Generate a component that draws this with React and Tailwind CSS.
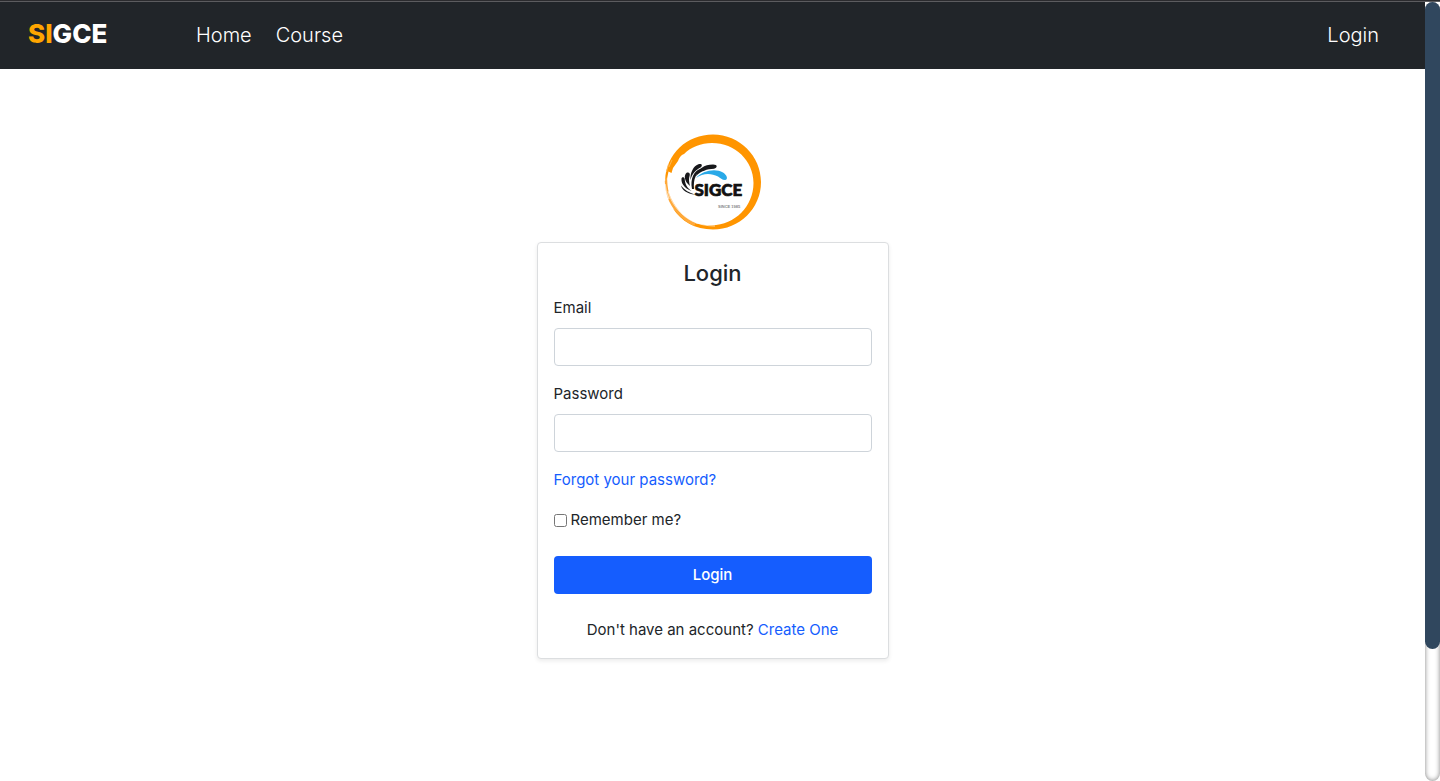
import React from "react";

function Logo() {
  return (
    <svg viewBox="0 0 120 115" className="h-[115px] w-[120px]" role="img" aria-label="SIGCE since 1985">
      <path
        fill="#ff9500"
        d="M12.200 55C13 29 34 9.500 60 9.500C86.500 9.500 108 31 108 57C108 83.500 86.500 104.500 60 104.500C42 104.500 28 96 20 83.500C25 88 31 94 39 97C45 99.500 52 100.300 59 100.300C82 100 100.500 81 100.500 58C100.500 35.500 82 18 59 18C48 18 38 22 31 29C28 30 26 33 25 36L20 43L18.500 48L15.500 46.500L14 54Z"
      />
      <path
        fill="#ffa93a"
        d="M11.800 56L14 52L14.500 60C15 66 17 72 20 77C25 86 33 94 43 98L41 101C28 95 18 83 14.500 72C12.500 66 12 61 11.800 56Z"
      />
      <path d="M15 66C18 78 27 90 39 96C46 99.500 54 101 62 101" fill="none" stroke="#fff" strokeWidth="0.800" opacity="0.8" />
      <path d="M12 59C12.500 65 14 70 16 74" fill="none" stroke="#fff" strokeWidth="1.500" opacity="0.6" />
      <path d="M15.500 39L13.500 47M19 35L16 42" stroke="#ffc36e" strokeWidth="0.700" />
      <g fill="#17181b">
        <path d="M43 51C45 44 51 39.500 60 39.500C65 39.500 64.500 42.800 61 43.700C54 44 48 46 43 51Z" />
        <path d="M37.500 55C37 48 40 41 46 39C49.500 38.500 49.500 41 47.500 42.500C42.500 45 39 49 37.500 55Z" />
        <path d="M37 61C31 56 30.500 50 34 47.500C36.500 47 37.200 48.500 36.700 50.500C35.500 54 36 57 37 61Z" />
        <path d="M38.500 66C31 63 28 58 28.500 53.500C29 51.500 31.500 52 31.700 54C32 59 34 63 38.500 66Z" />
        <path d="M42 69.500C34 69 29 65 28 60.500C32 65.500 36 67.500 42 69.500Z" />
        <path d="M39 64C37 54 41 46 47 44L50 43C43 48 40 54 41 64Z" />
      </g>
      <path d="M43 53C49 46 62 43 70 47.500C74 50 75.500 54.500 72 55C69 55 67.500 53 65 51.500C58 48 50 48 43 53Z" fill="#29a9e8" />
      <text x="41.500" y="71" fontSize="17" className="font-['Lato',sans-serif] font-black" fill="#111" stroke="#111" strokeWidth="0.700">SIGCE</text>
      <text x="65" y="83" fontSize="4" className="font-['Liberation_Sans',sans-serif] font-bold" fill="#888">SINCE 1985</text>
    </svg>
  );
}

function Field({ id, label, type }) {
  return (
    <div className="mb-4">
      <label htmlFor={id} className="mb-2 block">{label}</label>
      <input
        id={id}
        type={type}
        className="block h-[38px] w-full rounded-sm border border-[#ced4da] bg-white px-3 outline-none focus:border-[#155dfe]"
      />
    </div>
  );
}

function NavBar() {
  return (
    <nav className="flex h-[67px] items-center bg-[#212529] pl-7 pr-[46px] pb-[2px] text-xl font-light text-white">
      <a href="#" className="w-[168px] text-[26px] font-extrabold">
        <span className="text-[#ffa500]">SI</span>GCE
      </a>
      <a href="#home">Home</a>
      <a href="#course" className="ml-6">Course</a>
      <a href="#login" className="ml-auto">Login</a>
    </nav>
  );
}

function LoginCard() {
  return (
    <form
      onSubmit={(e) => e.preventDefault()}
      className="w-[352px] rounded-sm border border-[#dcdee0] bg-white p-4 shadow-[0_2px_4px_rgba(0,0,0,0.08)]"
    >
      <h1 className="mb-2 text-center text-[22px] leading-[29px] font-medium">Login</h1>
      <Field id="email" label="Email" type="email" />
      <Field id="password" label="Password" type="password" />
      <a href="#forgot" className="mb-4 block text-[#155dfe]">Forgot your password?</a>
      <div className="mb-6 flex items-center gap-1">
        <input id="remember" type="checkbox" className="size-[13px]" />
        <label htmlFor="remember">Remember me?</label>
      </div>
      <button type="submit" className="mb-6 h-[38px] w-full rounded-sm bg-[#155dfe] font-medium text-white">Login</button>
      <p className="text-center">
        Don't have an account? <a href="#register" className="text-[#155dfe]">Create One</a>
      </p>
    </form>
  );
}

export default function App() {
  return (
    <div className="flex h-screen flex-col bg-white font-['Inter',sans-serif] text-[15px] leading-6 text-[#212529]">
      <div className="h-[2px] shrink-0 border-b border-[#5c5c5f] bg-[#2b2b2e]" />
      <div className="flex min-h-0 flex-1">
        <div className="min-w-0 flex-1 overflow-hidden">
          <NavBar />
          <main className="flex flex-col items-center pt-14">
            <Logo />
            <div className="mt-[2px]">
              <LoginCard />
            </div>
          </main>
        </div>
        <div className="w-[15px] rounded-full bg-white shadow-[inset_0_0_5px_#808080]">
          <div className="h-[83%] rounded-full bg-[#30475e]" />
        </div>
      </div>
    </div>
  );
}
